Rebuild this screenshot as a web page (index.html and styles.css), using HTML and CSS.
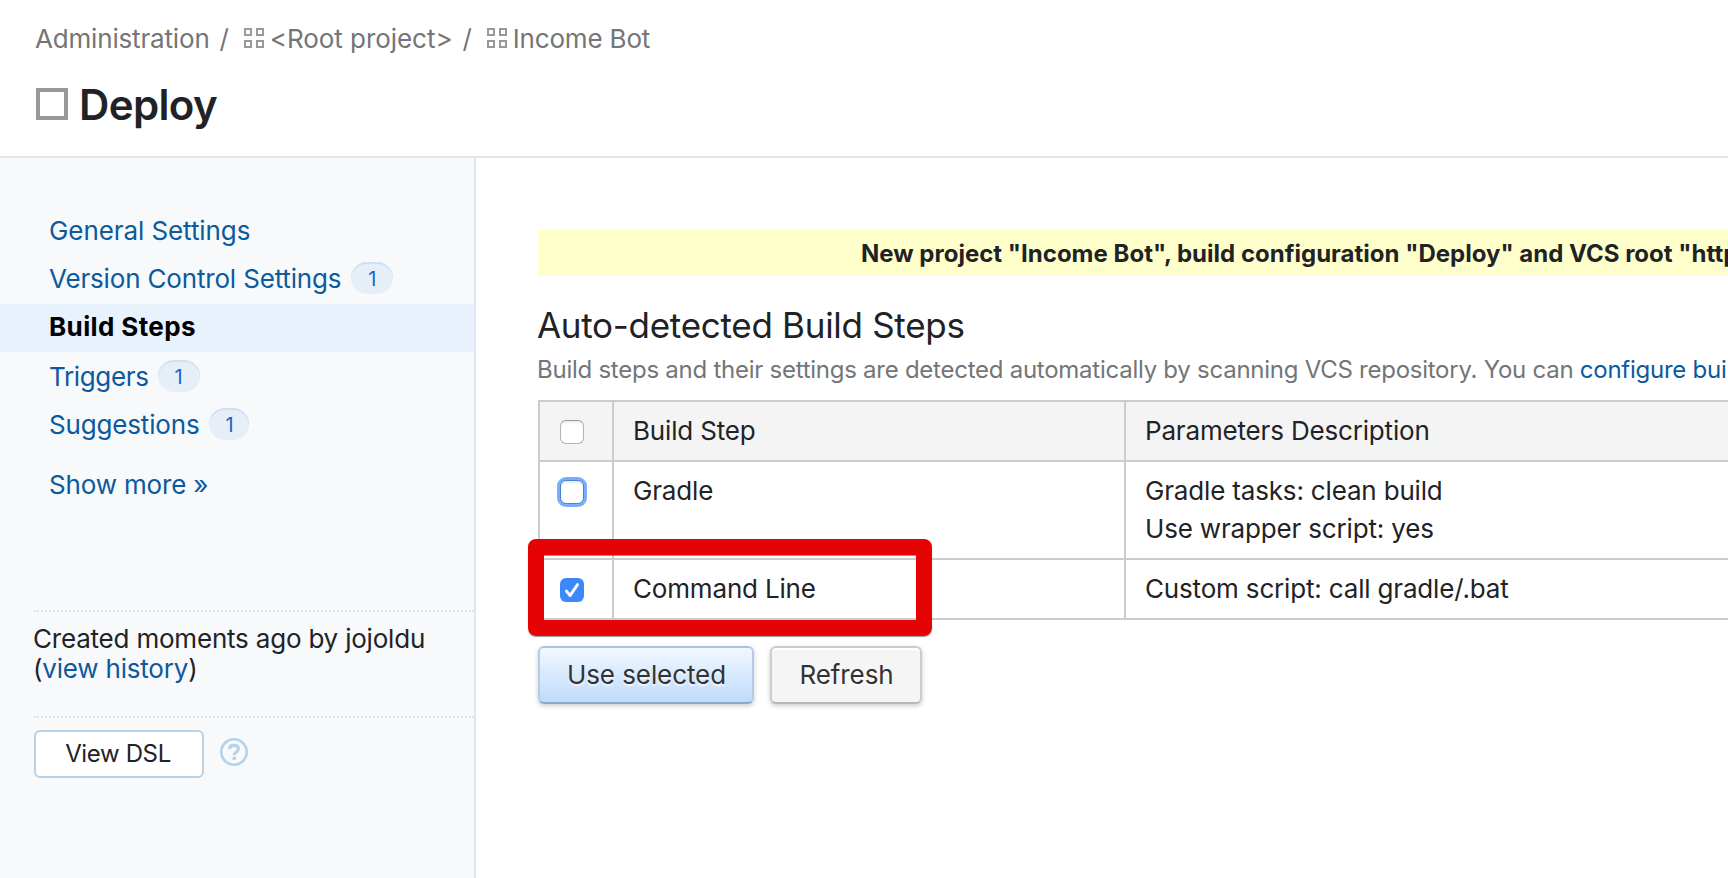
FILE: index.html
```html
<!DOCTYPE html>
<html lang="en">
<head>
<meta charset="utf-8">
<title>Deploy - Build Steps</title>
<link rel="stylesheet" href="styles.css">
</head>
<body>
<header class="header">
  <nav class="crumbs">
    <span>Administration</span><span class="slash">/</span>
    <svg class="project-icon" width="20" height="20" viewBox="0 0 20 20"><path d="M1 1h6v6H1zM13 1h6v6h-6zM1 13h6v6H1zM13 13h6v6h-6z"/></svg>
    <span class="root">&lt;Root project&gt;</span><span class="slash">/</span>
    <svg class="project-icon" width="20" height="20" viewBox="0 0 20 20"><path d="M1 1h6v6H1zM13 1h6v6h-6zM1 13h6v6H1zM13 13h6v6h-6z"/></svg>
    <span>Income Bot</span>
  </nav>
  <div class="title-row"><span class="config-icon"></span><h1 class="title">Deploy</h1></div>
</header>
<div class="body">
  <aside class="sidebar">
    <ul class="menu">
      <li class="item"><a class="general">General Settings</a></li>
      <li class="item"><a>Version Control Settings</a><span class="badge">1</span></li>
      <li class="item active">Build Steps</li>
      <li class="item after-active"><a class="triggers">Triggers</a><span class="badge">1</span></li>
      <li class="item"><a>Suggestions</a><span class="badge narrow">1</span></li>
      <li class="item more"><a>Show more »</a></li>
    </ul>
    <div class="created"><div class="created-text">Created moments ago by jojoldu<br>(<a>view history</a>)</div></div>
    <div class="dsl">
      <button class="dsl-button">View DSL</button>
      <svg class="help" width="28" height="28" viewBox="0 0 28 28"><circle cx="14" cy="14" r="12.7"/><path d="M9.6 11.2C9.6 8.6 11.4 7.4 14 7.4s4.4 1.4 4.4 3.6c0 2.9-4.2 3-4.2 6.2"/><rect x="12.4" y="18.7" width="3.6" height="3.2"/></svg>
    </div>
  </aside>
  <main class="main">
    <div class="message">New project "Income Bot", build configuration "Deploy" and VCS root "https://</div>
    <h2 class="heading">Auto-detected Build Steps</h2>
    <p class="note">Build steps and their settings are detected automatically by scanning VCS repository. You can <a>configure build steps</a></p>
    <div class="table-wrap">
      <div class="table">
        <div class="row head">
          <div class="check-cell"><span class="check"></span></div>
          <div class="cell">Build Step</div>
          <div class="cell">Parameters Description</div>
        </div>
        <div class="row">
          <div class="check-cell"><span class="check focused"></span></div>
          <div class="cell">Gradle</div>
          <div class="cell">Gradle tasks: clean build<br>Use wrapper script: yes</div>
        </div>
        <div class="row">
          <div class="check-cell"><span class="check checked"><svg width="24" height="24" viewBox="0 0 24 24"><path d="M6.4 13l3.7 4.6L17.5 6.600"/></svg></span></div>
          <div class="cell">Command Line</div>
          <div class="cell">Custom script: call gradle/.bat</div>
        </div>
      </div>
      <div class="highlight"></div>
    </div>
    <div class="buttons">
      <button class="btn primary">Use selected</button>
      <button class="btn">Refresh</button>
    </div>
  </main>
</div>
</body>
</html>
```
FILE: styles.css
```css
* { box-sizing: border-box; }
body {
  margin: 0;
  width: 1728px;
  height: 878px;
  overflow: hidden;
  display: flex;
  flex-direction: column;
  font: 26px/30px Inter, "Liberation Sans", sans-serif;
  letter-spacing: -0.17px;
  color: #1f2326;
  background: #fff;
}
a { color: #0b5a9d; }
button { font: inherit; letter-spacing: inherit; margin: 0; }

.header {
  height: 158px;
  flex: none;
  border-bottom: 2px solid #dfe5eb;
  padding: 24px 0 0 35px;
}
.crumbs { display: flex; align-items: center; height: 30px; color: #737577; }
.slash { margin: 0 15px 0 10px; }
.project-icon { fill: none; stroke: #999; stroke-width: 2; margin: -2px 6px 0 0; }
.root { letter-spacing: -0.05px; }
.title-row { display: flex; align-items: center; gap: 11px; margin: 25px 0 0 1px; height: 50px; }
.config-icon { width: 32px; height: 32px; border: 4px solid #999; }
.title { margin: 0; padding-top: 1px; font-size: 42px; line-height: 50px; font-weight: 600; letter-spacing: -0.63px; }

.body { flex: 1; display: flex; min-height: 0; }
.sidebar { width: 476px; flex: none; background: #f7f9fb; border-right: 2px solid #dfe5eb; }
.menu { list-style: none; margin: 0; padding: 50px 0 0; height: 452px; }
.item { height: 48px; line-height: 45px; padding-left: 49px; display: flex; align-items: flex-start; }
.active { background: #e7f2fd; color: #000; font-weight: 700; letter-spacing: 0.38px; }
.after-active { margin-top: 2px; }
.general { letter-spacing: -0.08px; }
.triggers { letter-spacing: -0.35px; }
.more { margin-top: 12px; }
.badge {
  width: 42px;
  height: 32px;
  margin: 6px 0 0 10px;
  border-radius: 16px;
  background: #e6eff8;
  box-shadow: inset 0 2px 0 #d0e0f4;
  color: #1a63cf;
  font-size: 20px;
  line-height: 34px;
  text-align: center;
}
.after-active .badge { margin-left: 9px; }
.narrow { width: 40px; }
.created { margin-left: 34px; height: 106px; padding-top: 12px; border-top: 2px dotted #dfe5ee; letter-spacing: -0.2px; }
.created-text { margin-left: -1px; }
.dsl { margin-left: 34px; border-top: 2px dotted #dfe5ee; padding-top: 12px; display: flex; gap: 16px; }
.dsl-button {
  width: 170px;
  height: 48px;
  padding: 0 2px 0 0;
  border: 2px solid #b7d2e7;
  border-radius: 6px;
  background: #fff;
  color: #1f2326;
  font-size: 24px;
  letter-spacing: -0.36px;
}
.help { margin-top: 8px; fill: none; stroke: #b7d2e7; stroke-width: 2.600; }
.help path { stroke-width: 3.200; }
.help rect { fill: #b7d2e7; stroke: none; }

.main { flex: 1; min-width: 0; padding: 72px 0 0 62px; white-space: nowrap; overflow: hidden; }
.message {
  height: 46px;
  padding-left: 323px;
  background: #ffc;
  font-size: 24px;
  line-height: 48px;
  font-weight: 700;
  letter-spacing: 0.005px;
}
.heading { margin: 27px 0 0 -1px; height: 44px; font-size: 35px; line-height: 44px; font-weight: 400; letter-spacing: -0.29px; }
.note { margin: 8px 0 0 -1px; height: 45px; font-size: 24px; line-height: 30px; letter-spacing: -0.255px; color: #737577; }
.table-wrap { position: relative; }
.table { border: 2px solid #ccc; border-width: 2px 0 0 2px; }
.row { display: grid; grid-template-columns: 72px 512px 1fr; border-bottom: 2px solid #ccc; line-height: 38px; }
.head { background: #f4f4f4; }
.cell { padding: 10px 18px 10px 19px; border-left: 2px solid #ccc; }
.check-cell { padding: 18px 0 0 20px; }
.check {
  display: block;
  width: 24px;
  height: 24px;
  border: 1px solid #b4b4b4;
  border-top-color: #999;
  border-radius: 6px;
  background: #fff;
  box-shadow: inset 0 2px 2px #eee;
}
.focused { border-color: #4483d8; box-shadow: 0 0 0 3px #7aaefb, inset 0 2px 2px #eee; }
.checked { border: 0; background: #3b88fd; box-shadow: none; }
.checked svg { display: block; fill: none; stroke: #fff; stroke-width: 2.800; stroke-linecap: round; stroke-linejoin: round; }
.highlight {
  position: absolute;
  left: -10px;
  top: 139px;
  width: 404px;
  height: 97px;
  border: 16px solid #e60303;
  border-radius: 8px;
  box-shadow: 0 1px 1px rgba(0, 0, 0, 0.4), inset 0 1px 0 rgba(0, 0, 0, 0.4);
}
.buttons { display: flex; gap: 16px; margin-top: 26px; }
.btn {
  width: 152px;
  height: 58px;
  padding: 0 0 0 1px;
  border: 2px solid #ccc;
  border-bottom-color: #b8b8b8;
  border-radius: 6px;
  background: #f5f5f5;
  box-shadow: 0 2px 5px rgba(0, 0, 0, 0.2), inset 0 2px 0 #fff;
  color: #333;
  letter-spacing: -0.08px;
  text-shadow: 0 2px 2px #fff;
}
.primary {
  width: 216px;
  border-color: #a9c3e2 #b3cbe6 #8ba9c9;
  background: linear-gradient(#f2f8ff, #bedbfc);
  box-shadow: 0 2px 5px rgba(0, 0, 0, 0.2);
  text-shadow: 0 2px 2px rgba(255, 255, 255, 0.75);
}
```
